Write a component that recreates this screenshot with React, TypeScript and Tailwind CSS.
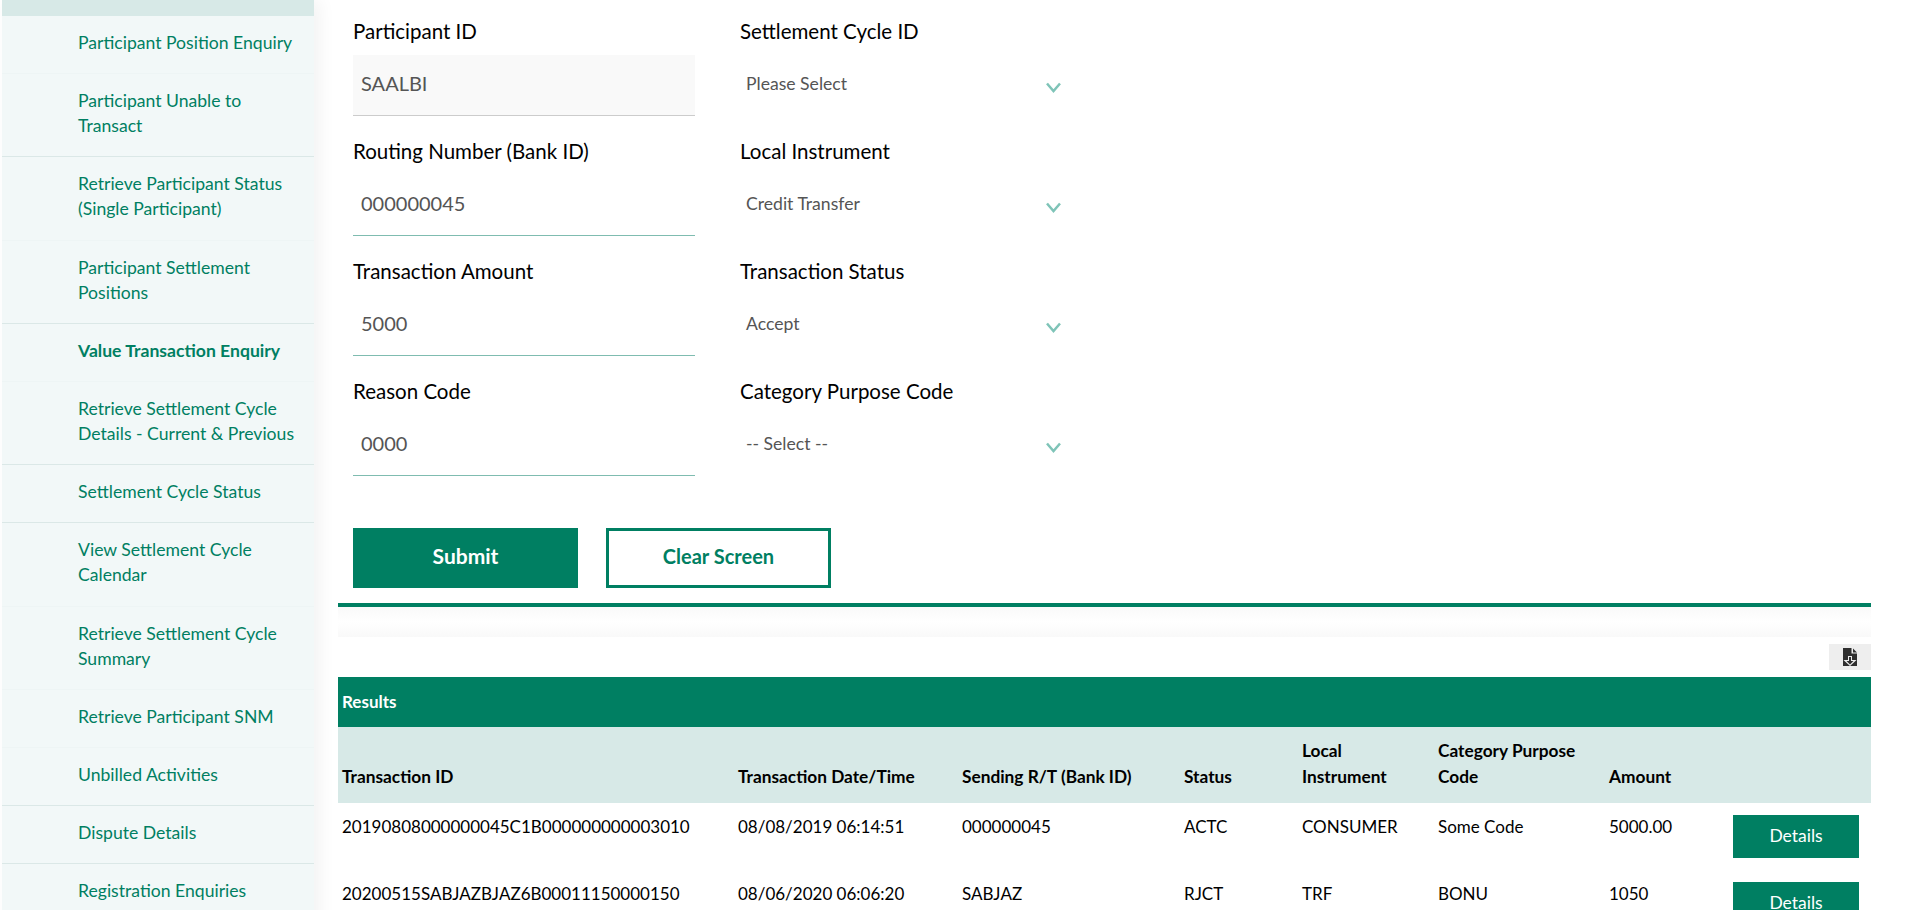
const menu = [
  { text: ["Participant Position Enquiry"], line: "border-[#eef5f5]" },
  { text: ["Participant Unable to", "Transact"], line: "border-[#dbe8e7]" },
  { text: ["Retrieve Participant Status", "(Single Participant)"], line: "border-[#eef5f5]" },
  { text: ["Participant Settlement", "Positions"], line: "border-[#dbe8e7]" },
  { text: ["Value Transaction Enquiry"], line: "border-[#eef5f5]", active: true },
  { text: ["Retrieve Settlement Cycle", "Details - Current & Previous"], line: "border-[#dbe8e7]" },
  { text: ["Settlement Cycle Status"], line: "border-[#dbe8e7]" },
  { text: ["View Settlement Cycle", "Calendar"], line: "border-[#eef5f5]" },
  { text: ["Retrieve Settlement Cycle", "Summary"], line: "border-[#eef5f5]" },
  { text: ["Retrieve Participant SNM"], line: "border-[#eef5f5]" },
  { text: ["Unbilled Activities"], line: "border-[#dbe8e7]" },
  { text: ["Dispute Details"], line: "border-[#dbe8e7]" },
  { text: ["Registration Enquiries"], line: "border-[#eef5f5]" },
];

const rows = [
  ["20190808000000045C1B000000000003010", "08/08/2019 06:14:51", "000000045", "ACTC", "CONSUMER", "Some Code", "5000.00"],
  ["20200515SABJAZBJAZ6B00011150000150", "08/06/2020 06:06:20", "SABJAZ", "RJCT", "TRF", "BONU", "1050"],
];

function Campo({ label, value, readOnly }: { label: string; value: string; readOnly?: boolean }) {
  return (
    <div className="h-[120px] w-[342px]">
      <div className="h-[55px] pt-[17px] text-[20.5px] leading-[28px] text-black">{label}</div>
      <div
        className={`flex h-[61px] items-center border-b px-[8px] pb-[4px] text-[20px] text-[#555] ${
          readOnly ? "border-[#ccc] bg-[#f9f9f9]" : "border-[#7fbcb0]"
        }`}
      >
        {value}
      </div>
    </div>
  );
}

function Selector({ label, value }: { label: string; value: string }) {
  return (
    <div className="h-[120px] w-[330px]">
      <div className="h-[55px] pt-[17px] text-[20.5px] leading-[28px] text-black">{label}</div>
      <div className="flex h-[61px] items-center justify-between pb-[3px] pl-[6px] pr-[9px] text-[17.6px] text-[#555]">
        <span>{value}</span>
        <svg width="15" height="11" viewBox="0 0 15 11" className="mt-[6px]" fill="none" stroke="#7fc4b8" strokeWidth="2.5">
          <path d="M1 1.5l6.5 7.5 6.5-7.5" />
        </svg>
      </div>
    </div>
  );
}

export default function App() {
  return (
    <div className="flex h-[910px] overflow-hidden bg-white font-['Lato',sans-serif]">
      <aside className="ml-[2px] h-[960px] w-[312px] shrink-0 bg-[#f2f8f8] shadow-[6px_0_16px_rgba(0,0,0,0.05)]">
        <div className="h-[16px] bg-[#d7e9e7]" />
        {menu.map((item) => (
          <div
            key={item.text[0]}
            className={`border-b pb-[18.2px] pl-[76px] pt-[14px] text-[17.6px] leading-[25px] text-[#007f62] ${item.line} ${
              item.active ? "font-bold" : ""
            }`}
          >
            {item.text.map((t) => (
              <div key={t}>{t}</div>
            ))}
          </div>
        ))}
      </aside>

      <main className="ml-[24px] w-[1533px] shrink-0">
        <div className="pl-[15px]">
          <div className="flex gap-[45px]">
            <div>
              <Campo label="Participant ID" value="SAALBI" readOnly />
              <Campo label="Routing Number (Bank ID)" value="000000045" />
              <Campo label="Transaction Amount" value="5000" />
              <Campo label="Reason Code" value="0000" />
            </div>
            <div>
              <Selector label="Settlement Cycle ID" value="Please Select" />
              <Selector label="Local Instrument" value="Credit Transfer" />
              <Selector label="Transaction Status" value="Accept" />
              <Selector label="Category Purpose Code" value="-- Select --" />
            </div>
          </div>
          <div className="mt-[48px] flex gap-[28px]">
            <button className="h-[60px] w-[225px] bg-[#007f62] pb-[4px] text-[21px] font-bold text-white">Submit</button>
            <button className="h-[60px] w-[225px] border-[3px] border-[#007f62] bg-white pb-[4px] text-[20px] font-bold text-[#007f62]">
              Clear Screen
            </button>
          </div>
        </div>

        <div className="mt-[15px] h-[4px] bg-[#007f62]" />
        <div className="h-[30px] bg-gradient-to-b from-[#f9f9f9] via-white to-[#f9f9f9]" />

        <div className="mt-[7px] flex justify-end">
          <div className="flex h-[26px] w-[42px] items-center justify-center bg-[#eee]">
            <svg width="14" height="18" viewBox="0 0 14 18" fill="#2f2f2f">
              <path d="M0 0h8.5v5.5H14V18H0z" />
              <path d="M10 0.5L14 4.5H10z" />
              <path d="M5 8h4v4h4.5L7 18 .5 12H5z" fill="#eee" />
              <path d="M6 9h2v4h2.5L7 16.5 3.5 13H6z" />
            </svg>
          </div>
        </div>

        <div className="mt-[7px] flex h-[50px] items-center bg-[#007f62] pb-[1px] pl-[4px] text-[17px] font-bold text-white">Results</div>

        <table className="w-full table-fixed border-collapse text-[17px] leading-[25.5px] text-black">
          <colgroup>
            <col className="w-[396px]" />
            <col className="w-[224px]" />
            <col className="w-[222px]" />
            <col className="w-[118px]" />
            <col className="w-[136px]" />
            <col className="w-[171px]" />
            <col className="w-[124px]" />
            <col className="w-[142px]" />
          </colgroup>
          <thead>
            <tr className="h-[76px] bg-[#d7e9e7]">
              {["Transaction ID", "Transaction Date/Time", "Sending R/T (Bank ID)", "Status", "Local Instrument", "Category Purpose Code", "Amount", ""].map((h) => (
                <th key={h} className="pb-[14px] pl-[4px] pr-[12px] pt-[10px] text-left align-bottom text-[17.3px] font-bold">
                  {h}
                </th>
              ))}
            </tr>
          </thead>
          <tbody>
            {rows.map((r) => (
              <tr key={r[0]} className="h-[67px]">
                {r.map((c) => (
                  <td key={c} className="px-[4px] pb-[24px] pt-[11px] align-top">
                    {c}
                  </td>
                ))}
                <td className="px-[4px] pt-[12px] align-top">
                  <button className="h-[43px] w-[126px] bg-[#007f62] pb-[2px] text-[17.5px] text-white">Details</button>
                </td>
              </tr>
            ))}
          </tbody>
        </table>
      </main>
    </div>
  );
}
